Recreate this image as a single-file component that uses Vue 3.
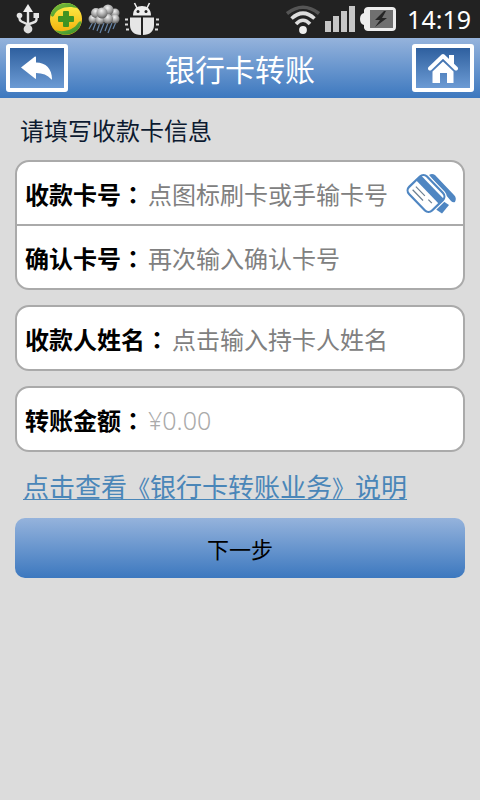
<script setup>
import { reactive } from 'vue'

const form = reactive({ card: '', confirm: '', name: '', amount: '' })

const groups = [
  [
    { key: 'card', label: '收款卡号', hint: '点图标刷卡或手输卡号', swipe: true },
    { key: 'confirm', label: '确认卡号', hint: '再次输入确认卡号' }
  ],
  [{ key: 'name', label: '收款人姓名', hint: '点击输入持卡人姓名' }],
  [{ key: 'amount', label: '转账金额', hint: '¥0.00', money: true }]
]
</script>

<template>
  <div class="screen">
    <div class="status">
      <div class="status-side">
        <svg class="usb" width="24" height="30" viewBox="0 0 24 30">
          <g fill="none" stroke="#e4e4e4" stroke-width="2.4">
            <path d="M12 5V25" />
            <path d="M3.5 12v2.5q0 2 2 3L12 20.5l5.500-2q3-1 3-3V12" />
          </g>
          <path d="M12 0l5 8H7z" fill="#eee" />
          <circle cx="3.500" cy="11.500" r="2.800" fill="#e4e4e4" />
          <rect x="17.500" y="9" width="5.500" height="5" fill="#e4e4e4" />
          <circle cx="12" cy="25" r="4.400" fill="#ddd" />
        </svg>
        <svg class="guard" width="34" height="34" viewBox="0 0 34 34">
          <defs>
            <linearGradient id="gold" x1="0" y1="0" x2="0" y2="1">
              <stop offset="0" stop-color="#fff04a" />
              <stop offset="1" stop-color="#f2ab08" />
            </linearGradient>
            <linearGradient id="leaf" x1="0" y1="0" x2="1" y2="1">
              <stop offset="0" stop-color="#86c43c" />
              <stop offset="1" stop-color="#2f8a2b" />
            </linearGradient>
          </defs>
          <circle cx="17" cy="17" r="16" fill="url(#gold)" />
          <path d="M1.500 13A16 16 0 0 1 29 6.500C20 3 8 5.500 5 13.500q-1.500 2.500-3.500-.5z" fill="url(#leaf)" />
          <path d="M32.500 20A16 16 0 0 1 5.500 28C14 31 25 28 29 21q2-3 3.500-1z" fill="url(#leaf)" />
          <path d="M15 9h4q1 0 1 1v4h4q1 0 1 1v4q0 1-1 1h-4v4q0 1-1 1h-4q-1 0-1-1v-4h-4q-1 0-1-1v-4q0-1 1-1h4v-4q0-1 1-1z" fill="#3f9322" />
        </svg>
        <svg class="rain" width="34" height="30" viewBox="0 0 34 30">
          <defs>
            <radialGradient id="puff" cx=".45" cy=".3" r=".7">
              <stop offset="0" stop-color="#f4f4f4" />
              <stop offset=".6" stop-color="#a0a0a0" />
              <stop offset="1" stop-color="#5c5c5c" />
            </radialGradient>
          </defs>
          <path d="M6 18l-4 7M9 18l-3 8M13 19l-3 8M17 19l-4 10M21 19l-3 8M25 19l-4 10M29 18l-3 7" stroke="#6685a8" stroke-width="1.200" />
          <g fill="url(#puff)">
            <circle cx="28" cy="9" r="4.500" />
            <circle cx="6" cy="15" r="4.500" />
            <circle cx="28" cy="15" r="4.500" />
            <circle cx="21" cy="6" r="5.500" />
            <circle cx="9" cy="9" r="5" />
            <circle cx="13" cy="16" r="4.500" />
            <circle cx="21" cy="15" r="5" />
            <circle cx="15" cy="9" r="5.500" />
          </g>
        </svg>
        <svg class="bug" width="34" height="34" viewBox="0 0 34 34">
          <path d="M8 13.500C8 7 12 4 17 4s9 3 9 9.500z" fill="#eee" />
          <path d="M12 6L9.500 1M22 6l2.500-5" stroke="#eee" stroke-width="1.600" />
          <circle cx="13" cy="9.500" r="1.500" fill="#222" />
          <circle cx="21" cy="9.500" r="1.500" fill="#222" />
          <path d="M5 15.500h11V33C9 33 5 29 5 23zM18 15.500h11V23c0 6-4 10-11 10z" fill="#e6e6e6" />
          <path d="M0 17.500h3M0 22.500h3M1 27.500h3M31 17.500h3M31 22.500h3M30 27.500h3" stroke="#ddd" stroke-width="2" />
        </svg>
      </div>
      <div class="status-side">
        <svg class="wifi" width="34" height="31" viewBox="0 0 34 31">
          <g fill="none" stroke-width="3.600">
            <path d="M1 9.500Q17-3 33 9.500" stroke="#555" />
            <path d="M5.500 14.500Q17 4 28.500 14.500" stroke="#ddd" />
            <path d="M10 20Q17 12.500 24 20" stroke="#ddd" />
          </g>
          <circle cx="17" cy="26" r="3.900" fill="#eee" />
        </svg>
        <svg class="signal" width="30" height="26" viewBox="0 0 30 26">
          <path d="M0 15h6v11H0zM8 10h6v16H8zM16 5h6v21h-6zM24 0h6v26h-6z" fill="#c6c6c6" />
        </svg>
        <svg class="battery" width="36" height="24" viewBox="0 0 36 24">
          <path d="M8 0h24q4 0 4 4v16q0 4-4 4H8q-3 0-4-3v-3q-4-1-4-6t4-6V3q1-3 4-3z" fill="#eee" />
          <rect x="10" y="3" width="23" height="18" fill="#707070" />
          <path d="M24 4l-9 9h5l-5 7 12-9h-5l4-7z" fill="#262626" />
        </svg>
        <span class="clock">14:19</span>
      </div>
    </div>

    <header class="bar">
      <button type="button" class="nav" aria-label="返回">
        <svg width="32" height="24" viewBox="0 0 32 24">
          <path d="M0 11.500L14 .5q1-.5 1 1V6.500C25 6.500 31 13 31 23q0 1-1 0-5-6-15-6V22q0 1.500-1 .5z" fill="#fff" />
        </svg>
      </button>
      <h1>银行卡转账</h1>
      <button type="button" class="nav" aria-label="首页">
        <svg width="30" height="30" viewBox="0 0 30 30">
          <path d="M2 15.500L15 3l13 12.500" fill="none" stroke="#fff" stroke-width="4" stroke-linecap="round" stroke-linejoin="round" />
          <path d="M21 2h5v10l-5-4z" fill="#fff" />
          <path d="M15 8.500l10.500 10V30H19V20h-7v10H4.500V18.500z" fill="#fff" />
        </svg>
      </button>
    </header>

    <form class="content" @submit.prevent>
      <h2>请填写收款卡信息</h2>
      <div v-for="(rows, i) in groups" :key="i" class="card">
        <div v-for="row in rows" :key="row.key" class="row">
          <label :for="row.key">{{ row.label }}<span class="colon">：</span></label>
          <input
            :id="row.key"
            v-model="form[row.key]"
            type="text"
            :class="{ money: row.money }"
            :placeholder="row.hint"
          />
          <button v-if="row.swipe" type="button" class="swipe" aria-label="刷卡">
            <svg width="52" height="42" viewBox="0 0 52 42">
              <path d="M24 2q3-2 6 0L49 22q3 3 1 7-2 1-4-1z" fill="#4f86c2" />
              <path d="M38 28l6 4-7 8.500-6-4z" fill="#4f86c2" />
              <g transform="translate(21 20.500) rotate(46)">
                <rect x="-16.500" y="-12.500" width="33" height="25" rx="5" fill="#fff" stroke="#fff" stroke-width="4.500" />
                <rect x="-16.500" y="-12.500" width="33" height="25" rx="5" fill="#fff" stroke="#4f86c2" stroke-width="2.200" />
                <rect x="-16" y="-9" width="32" height="7" fill="#4f86c2" />
                <path d="M-12 2.500H1M-12 7H3M6 2.500h5" stroke="#6c7f91" stroke-width="1.200" />
              </g>
            </svg>
          </button>
        </div>
      </div>
      <a class="terms" href="#terms">点击查看<span class="mark">《</span>银行卡转账业务<span class="mark">》</span>说明</a>
      <button type="submit" class="next">下一步</button>
    </form>
  </div>
</template>

<style>
body {
  margin: 0;
  background: #dcdcdc;
}
</style>

<style scoped>
.screen,
button,
input {
  font-family: "Noto Sans CJK SC", sans-serif;
}
button {
  border: 0;
  padding: 0;
  cursor: pointer;
}
svg {
  display: block;
}
.status {
  display: flex;
  justify-content: space-between;
  height: 38px;
  padding: 0 9px 0 16px;
  background: #222;
}
.status-side {
  display: flex;
  align-items: center;
}
.guard {
  margin-left: 9px;
}
.rain,
.bug {
  margin-left: 4px;
}
.signal,
.battery {
  margin-left: 5px;
}
.clock {
  margin-left: 11px;
  font: 25px/36px "Noto Sans", sans-serif;
  color: #fff;
}
.bar {
  display: flex;
  align-items: center;
  justify-content: space-between;
  box-sizing: border-box;
  height: 60px;
  padding: 0 6px;
  background: linear-gradient(#95b3dc, #3c78bf);
}
.nav {
  display: flex;
  align-items: center;
  justify-content: center;
  width: 62px;
  height: 48px;
  border: 4px solid #fff;
  border-radius: 3px;
  background: linear-gradient(#2f609f, #6c9bd4);
}
h1 {
  margin: 0;
  font-size: 30px;
  line-height: 40px;
  font-weight: 400;
  color: #fff;
}
.content {
  display: flex;
  flex-direction: column;
  padding: 16px 15px;
}
h2 {
  margin: 0 0 14px;
  padding-left: 5px;
  font-size: 24px;
  line-height: 32px;
  font-weight: 400;
  color: #0c1a30;
}
.card {
  margin-bottom: 15px;
  border: 2px solid #aaa;
  border-radius: 14px;
  background: #fff;
}
.row {
  display: flex;
  align-items: center;
  height: 60px;
  padding: 2px 6px 0 8px;
}
.row + .row {
  border-top: 2px solid #aaa;
}
label {
  font-size: 24px;
  line-height: 32px;
  font-weight: 700;
  color: #000;
  white-space: nowrap;
}
.colon {
  font-family: "Noto Sans CJK TC", sans-serif;
}
input {
  flex: 1;
  min-width: 0;
  border: 0;
  padding: 0 0 0 3px;
  outline: 0;
  background: none;
  font-size: 24px;
  line-height: 32px;
  color: #000;
}
input::placeholder {
  color: #808080;
  opacity: 1;
}
.money {
  font-family: "Noto Sans", sans-serif;
  font-size: 25px;
  font-weight: 300;
}
.money::placeholder {
  color: #aaa;
}
.swipe {
  background: none;
}
.terms {
  align-self: flex-start;
  margin: 1px 0 15px 8px;
  font-size: 26px;
  line-height: 35px;
  color: #4a86b8;
  text-decoration: underline;
  text-decoration-thickness: 1px;
  text-underline-offset: 2px;
}
.mark {
  font-size: 23px;
  line-height: 1;
}
.next {
  height: 60px;
  border-radius: 10px;
  background: linear-gradient(#95b3dc, #3c78bf);
  font-size: 22px;
  color: #000;
}
</style>
